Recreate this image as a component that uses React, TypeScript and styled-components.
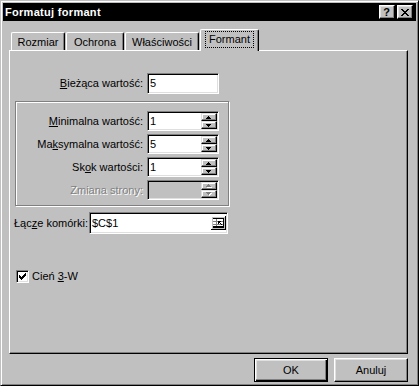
import React from "react";
import styled, { createGlobalStyle } from "styled-components";

const GlobalStyle = createGlobalStyle`
  *, *::before, *::after { box-sizing: border-box; }
  html, body { margin: 0; padding: 0; }
  body {
    width: 419px;
    height: 386px;
    overflow: hidden;
    background: #c0c0c0;
    font-family: "Liberation Sans", Arial, sans-serif;
    font-size: 11px;
    color: #000;
  }
`;

const Window = styled.div`
  width: 419px;
  height: 386px;
  display: flex;
  flex-direction: column;
  background: #c0c0c0;
  border: 1px solid;
  border-color: #c0c0c0 #000 #000 #c0c0c0;
  box-shadow: inset 1px 1px 0 #fff, inset -1px -1px 0 #808080;
  padding: 2px;
`;

const TitleBar = styled.div`
  flex: none;
  height: 18px;
  display: flex;
  align-items: center;
  justify-content: space-between;
  background: #000;
  padding: 0 3px 0 2px;
`;

const Title = styled.span`
  color: #fff;
  font-weight: bold;
  font-size: 11px;
  line-height: 13px;
  letter-spacing: 0.3px;
`;

const CaptionButtons = styled.div`
  display: flex;
  gap: 2px;
`;

const CaptionButton = styled.div`
  width: 16px;
  height: 14px;
  background: #c0c0c0;
  border: 1px solid;
  border-color: #fff #000 #000 #fff;
  box-shadow: inset -1px -1px 0 #808080, inset 1px 1px 0 #dfdfdf;
  display: flex;
  align-items: center;
  justify-content: center;
  padding-right: 1px;
`;

const HelpGlyph = styled.span`
  font-weight: bold;
  font-size: 11px;
  line-height: 11px;
`;

const Body = styled.div`
  flex: 1;
  display: flex;
  flex-direction: column;
  padding: 8px 0 0 6px;
`;

const TabRow = styled.div`
  flex: none;
  height: 21px;
  display: flex;
  align-items: flex-end;
  padding-left: 2px;
`;

const Tab = styled.div<{ $w: number; $active?: boolean }>`
  position: relative;
  width: ${(p) => p.$w}px;
  height: ${(p) => (p.$active ? 22 : 18)}px;
  margin-right: ${(p) => (p.$active ? 0 : 1)}px;
  margin-bottom: ${(p) => (p.$active ? -1 : 0)}px;
  z-index: ${(p) => (p.$active ? 2 : 1)};
  background: #c0c0c0;
  border-top: 1px solid #fff;
  border-left: 1px solid #fff;
  border-right: 1px solid #000;
  border-radius: 2px 2px 0 0;
  box-shadow: inset -1px 0 0 #808080;
  display: flex;
  justify-content: center;
  align-items: flex-start;
  padding-top: ${(p) => (p.$active ? 1 : 3)}px;
  line-height: 13px;
  white-space: nowrap;
`;

const FocusBox = styled.span`
  border: 1px dotted #000;
  padding: 1px 3px;
  line-height: 13px;
`;

const Panel = styled.div`
  flex: none;
  width: 399px;
  height: 304px;
  border: 1px solid;
  border-color: #fff #000 #000 #fff;
  box-shadow: inset -1px -1px 0 #808080;
  display: flex;
  flex-direction: column;
  align-items: flex-start;
  padding-top: 22px;
`;

const FormRow = styled.div<{ $labelW: number; $gap?: number }>`
  display: grid;
  grid-template-columns: ${(p) => p.$labelW}px auto;
  column-gap: ${(p) => p.$gap ?? 4}px;
  align-items: center;
`;

const Label = styled.span<{ $align?: "left" | "right"; $disabled?: boolean }>`
  text-align: ${(p) => p.$align ?? "right"};
  white-space: nowrap;
  line-height: 13px;
  color: ${(p) => (p.$disabled ? "#808080" : "#000")};
  text-shadow: ${(p) => (p.$disabled ? "1px 1px 0 #fff" : "none")};
`;

const U = styled.span`
  text-decoration: underline;
  text-underline-offset: 1px;
`;

const Group = styled.div`
  margin: 7px 0 0 5px;
  width: 214px;
  border: 1px solid #808080;
  box-shadow: inset 1px 1px 0 #fff, 1px 1px 0 #fff;
  padding: 9px 0 5px 0;
  display: flex;
  flex-direction: column;
  gap: 3px;
`;

const Field = styled.div<{ $w: number; $h: number; $disabled?: boolean }>`
  width: ${(p) => p.$w}px;
  height: ${(p) => p.$h}px;
  border: 1px solid;
  border-color: #808080 #fff #fff #808080;
  box-shadow: inset 1px 1px 0 #000, inset -1px -1px 0 #dfdfdf;
  background: ${(p) => (p.$disabled ? "#c0c0c0" : "#fff")};
  display: flex;
  align-items: center;
  padding: 1px 1px 1px 2px;
`;

const Value = styled.span`
  flex: 1;
  line-height: 13px;
  white-space: nowrap;
`;

const Spinner = styled.div`
  flex: none;
  align-self: stretch;
  width: 16px;
  display: flex;
  flex-direction: column;
`;

const SpinButton = styled.div`
  flex: 1;
  background: #c0c0c0;
  border: 1px solid;
  border-color: #dfdfdf #000 #000 #dfdfdf;
  box-shadow: inset -1px -1px 0 #808080, inset 1px 1px 0 #fff;
  display: flex;
  align-items: center;
  justify-content: center;
  padding-right: 1px;
`;

const RangeButton = styled.div`
  flex: none;
  width: 15px;
  height: 14px;
  display: flex;
`;

const LinkRow = styled.div`
  margin: 6px 0 0 4px;
`;

const CheckRow = styled.label`
  margin: 36px 0 0 6px;
  display: flex;
  align-items: center;
  gap: 3px;
  line-height: 13px;
`;

const CheckBox = styled.span`
  width: 13px;
  height: 13px;
  background: #fff;
  border: 1px solid;
  border-color: #808080 #fff #fff #808080;
  box-shadow: inset 1px 1px 0 #000, inset -1px -1px 0 #dfdfdf;
  display: flex;
  align-items: center;
  justify-content: center;
`;

const ButtonRow = styled.div`
  width: 399px;
  margin-top: 4px;
  display: flex;
  justify-content: flex-end;
  gap: 6px;
`;

const Button = styled.div<{ $default?: boolean }>`
  width: 74px;
  height: 24px;
  background: #c0c0c0;
  display: flex;
  align-items: center;
  justify-content: center;
  line-height: 13px;
  border: 1px solid;
  border-color: ${(p) => (p.$default ? "#000" : "#fff #000 #000 #fff")};
  box-shadow: ${(p) =>
    p.$default
      ? "inset 1px 1px 0 #fff, inset -1px -1px 0 #000, inset -2px -2px 0 #808080, inset 2px 2px 0 #dfdfdf"
      : "inset -1px -1px 0 #808080, inset 1px 1px 0 #dfdfdf"};
`;

const CLOSE = ["##....##", ".##..##.", "..####..", "...##...", "..####..", ".##..##.", "##....##"];
const UP = ["..#..", ".###.", "#####"];
const DOWN = ["#####", ".###.", "..#.."];
const CHECK = ["......#", ".....##", "#...###", "##.###.", "#####..", ".###...", "..#...."];

function PixelGlyph({ rows, color = "#000", emboss = false }: { rows: string[]; color?: string; emboss?: boolean }) {
  const w = rows[0].length + (emboss ? 1 : 0);
  const h = rows.length + (emboss ? 1 : 0);
  const cells = (fill: string, dx: number) =>
    rows.flatMap((r, y) =>
      r.split("").map((c, x) =>
        c === "#" ? <rect key={`${fill}-${x}-${y}`} x={x + dx} y={y + dx} width={1} height={1} fill={fill} /> : null
      )
    );
  return (
    <svg width={w} height={h} shapeRendering="crispEdges" aria-hidden="true">
      {emboss && cells("#fff", 1)}
      {cells(color, 0)}
    </svg>
  );
}

function SpinBox({ value, disabled }: { value?: string; disabled?: boolean }) {
  return (
    <Field $w={72} $h={20} $disabled={disabled}>
      <Value>{value}</Value>
      <Spinner>
        <SpinButton>
          <PixelGlyph rows={UP} color={disabled ? "#808080" : "#000"} emboss={disabled} />
        </SpinButton>
        <SpinButton>
          <PixelGlyph rows={DOWN} color={disabled ? "#808080" : "#000"} emboss={disabled} />
        </SpinButton>
      </Spinner>
    </Field>
  );
}

function RangeIcon() {
  return (
    <svg width="15" height="14" viewBox="0 0 15 14" shapeRendering="crispEdges" aria-hidden="true">
      <rect x="0" y="0" width="15" height="14" fill="#c0c0c0" />
      <rect x="0" y="0" width="14" height="1" fill="#fff" />
      <rect x="0" y="0" width="1" height="13" fill="#fff" />
      <rect x="14" y="0" width="1" height="14" fill="#000" />
      <rect x="0" y="13" width="15" height="1" fill="#000" />
      <rect x="2" y="2" width="10" height="1" fill="#000" />
      <rect x="2" y="3" width="10" height="7" fill="#fff" />
      <rect x="2" y="5" width="10" height="1" fill="#808080" />
      <rect x="2" y="8" width="10" height="1" fill="#808080" />
      <rect x="5" y="3" width="1" height="7" fill="#808080" />
      <rect x="7" y="5" width="3" height="1" fill="#000" />
      <rect x="7" y="6" width="1" height="2" fill="#000" />
      <rect x="8" y="6" width="1" height="1" fill="#000" />
      <rect x="9" y="7" width="1" height="1" fill="#000" />
      <rect x="10" y="8" width="1" height="1" fill="#000" />
      <rect x="2" y="10" width="11" height="2" fill="#000" />
      <rect x="12" y="2" width="1" height="10" fill="#000" />
    </svg>
  );
}

const tabs = [
  { label: "Rozmiar", w: 54 },
  { label: "Ochrona", w: 58 },
  { label: "Właściwości", w: 74 },
  { label: "Formant", w: 59, active: true },
];

export default function App() {
  return (
    <>
      <GlobalStyle />
      <Window>
        <TitleBar>
          <Title>Formatuj formant</Title>
          <CaptionButtons>
            <CaptionButton aria-label="Pomoc">
              <HelpGlyph>?</HelpGlyph>
            </CaptionButton>
            <CaptionButton aria-label="Zamknij">
              <PixelGlyph rows={CLOSE} />
            </CaptionButton>
          </CaptionButtons>
        </TitleBar>
        <Body>
          <TabRow>
            {tabs.map((t) => (
              <Tab key={t.label} $w={t.w} $active={t.active}>
                {t.active ? <FocusBox>{t.label}</FocusBox> : t.label}
              </Tab>
            ))}
          </TabRow>
          <Panel>
            <FormRow $labelW={133}>
              <Label>
                <U>B</U>ieżąca wartość:
              </Label>
              <Field $w={72} $h={21}>
                <Value>5</Value>
              </Field>
            </FormRow>
            <Group>
              <FormRow $labelW={127}>
                <Label>
                  <U>M</U>inimalna wartość:
                </Label>
                <SpinBox value="1" />
              </FormRow>
              <FormRow $labelW={127}>
                <Label>
                  Ma<U>k</U>symalna wartość:
                </Label>
                <SpinBox value="5" />
              </FormRow>
              <FormRow $labelW={127}>
                <Label>
                  Sk<U>o</U>k wartości:
                </Label>
                <SpinBox value="1" />
              </FormRow>
              <FormRow $labelW={127}>
                <Label $disabled>Zmiana strony:</Label>
                <SpinBox disabled />
              </FormRow>
            </Group>
            <LinkRow>
              <FormRow $labelW={71}>
                <Label $align="left">
                  Łąc<U>z</U>e komórki:
                </Label>
                <Field $w={139} $h={22}>
                  <Value>$C$1</Value>
                  <RangeButton>
                    <RangeIcon />
                  </RangeButton>
                </Field>
              </FormRow>
            </LinkRow>
            <CheckRow>
              <CheckBox>
                <PixelGlyph rows={CHECK} />
              </CheckBox>
              <span>
                Cień <U>3</U>-W
              </span>
            </CheckRow>
          </Panel>
          <ButtonRow>
            <Button $default>OK</Button>
            <Button>Anuluj</Button>
          </ButtonRow>
        </Body>
      </Window>
    </>
  );
}
